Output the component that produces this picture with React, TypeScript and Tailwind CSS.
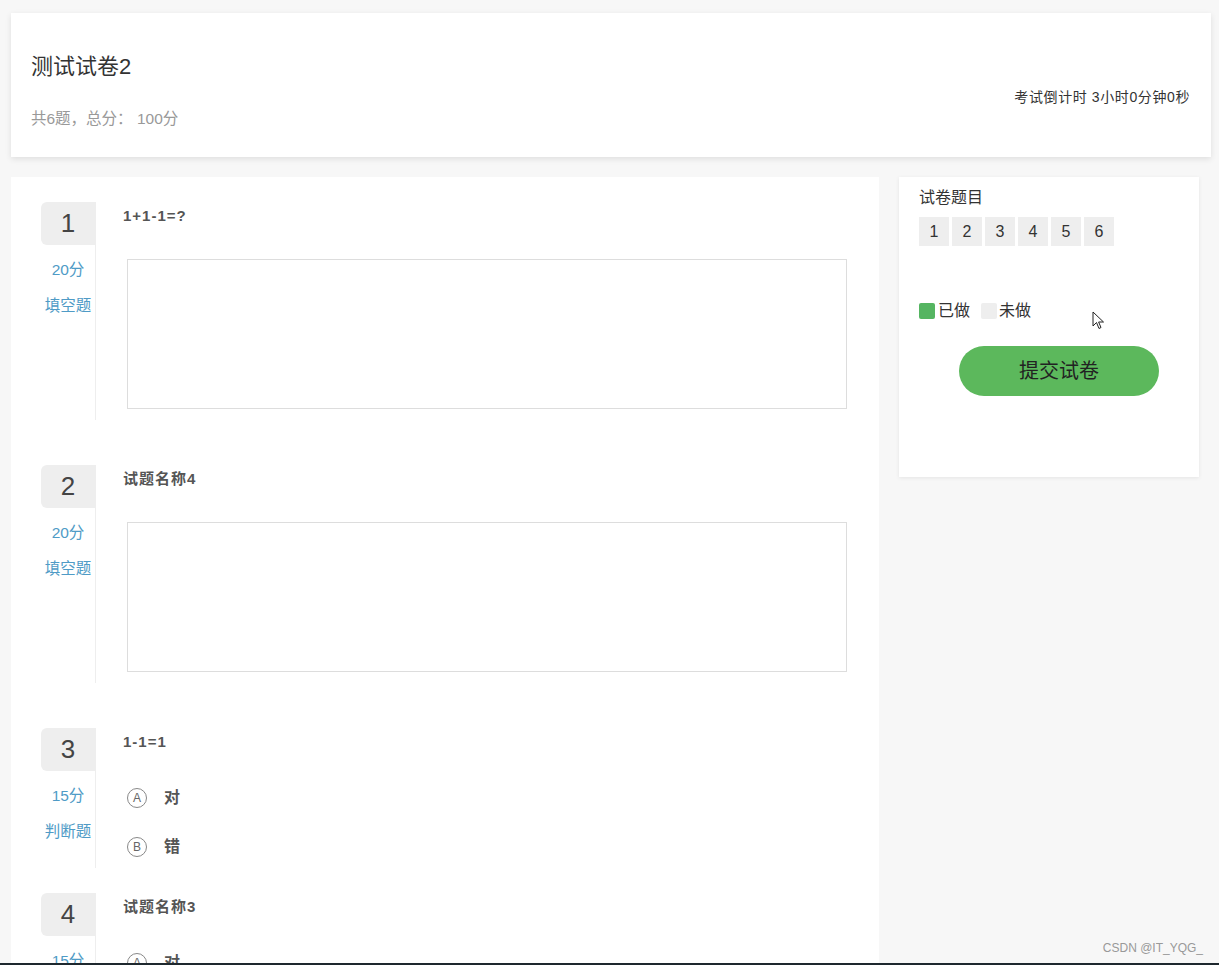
import React from 'react';

type Q = {
  no: number;
  title: string;
  score: string;
  kind: string;
  type: 'blank' | 'judge';
};

const questions: Q[] = [
  { no: 1, title: '1+1-1=?', score: '20分', kind: '填空题', type: 'blank' },
  { no: 2, title: '试题名称4', score: '20分', kind: '填空题', type: 'blank' },
  { no: 3, title: '1-1=1', score: '15分', kind: '判断题', type: 'judge' },
  { no: 4, title: '试题名称3', score: '15分', kind: '判断题', type: 'judge' },
];

const font = 'font-["Liberation_Sans","Noto_Sans_CJK_SC",sans-serif]';

const Question: React.FC<{ q: Q }> = ({ q }) => (
  <div className="flex">
    {/* 左侧题号 */}
    <div className="w-[55px] shrink-0 flex flex-col items-center border-r border-[#eee]">
      <div className="w-full h-[43px] bg-[#eee] rounded-l-[6px] flex items-center justify-center text-[26px] text-[#444]">
        {q.no}
      </div>
      <div className="mt-[15px] text-[15.5px] leading-[20px] text-[#4f9bc6]">{q.score}</div>
      <div className="mt-[16px] text-[15.5px] leading-[20px] text-[#4f9bc6]">{q.kind}</div>
    </div>
    {/* 题目内容 */}
    <div className="flex-1 pl-[27px] pr-[31px] pb-[11px]">
      <div className="pt-[4px] text-[15px] leading-[20px] font-bold text-[#555] tracking-[1px]">{q.title}</div>
      {q.type === 'blank' ? (
        <textarea className="mt-[33px] ml-1 block w-[720px] h-[150px] border border-[#ddd] resize-none outline-none" />
      ) : (
        <div className="mt-[36px] flex flex-col gap-[29px] pl-1">
          {['A', 'B'].map((k, i) => (
            <div key={k} className="flex items-center h-[20px]">
              <span className="w-[20px] h-[20px] rounded-full border border-[#888] text-[12px] text-[#666] flex items-center justify-center leading-none">
                {k}
              </span>
              <span className="ml-[17px] text-[16px] font-bold text-[#555]">{i === 0 ? '对' : '错'}</span>
            </div>
          ))}
        </div>
      )}
    </div>
  </div>
);

const App: React.FC = () => {
  return (
    <div className={`min-h-[965px] bg-[#f7f7f7] ${font} relative overflow-hidden`}>
      <div className="w-[1200px] ml-[11px] pt-[13px]">
        {/* 头部 */}
        <div className="bg-white h-[144px] shadow-[0_2px_6px_rgba(0,0,0,0.1)] px-5 flex items-end justify-between pb-[28px]">
          <div>
            <div className="text-[22px] leading-[30px] text-[#333]">测试试卷2</div>
            <div className="mt-[27px] text-[15.5px] leading-[20px] text-[#999]">共6题，总分： 100分</div>
          </div>
          <div className="text-[14px] text-[#333] mb-[21px] mr-[1px] tracking-[0.6px]">考试倒计时 3小时0分钟0秒</div>
        </div>

        <div className="flex items-start gap-5 mt-5">
          {/* 试题 */}
          <div className="w-[868px] bg-white pl-[30px] pt-[25px] h-[790px] overflow-hidden flex flex-col">
            <Question q={questions[0]} />
            <div className="mt-[45px]"><Question q={questions[1]} /></div>
            <div className="mt-[45px]"><Question q={questions[2]} /></div>
            <div className="mt-[25px]"><Question q={questions[3]} /></div>
          </div>

          {/* 答题卡 */}
          <div className="w-[300px] h-[300px] bg-white shadow-[0_1px_4px_rgba(0,0,0,0.08)] px-5 pt-[11px]">
            <div className="text-[16px] leading-[20px] text-[#333]">试卷题目</div>
            <div className="mt-[9px] flex gap-[3px]">
              {[1, 2, 3, 4, 5, 6].map((n) => (
                <div key={n} className="w-[30px] h-[29px] bg-[#eee] flex items-center justify-center text-[16px] text-[#333]">
                  {n}
                </div>
              ))}
            </div>
            <div className="mt-[53px] flex items-center text-[16px] text-[#333]">
              <span className="w-4 h-4 bg-[#55b561] rounded-[2px]" />
              <span className="ml-[3px]">已做</span>
              <span className="ml-[11px] w-4 h-4 bg-[#eee] rounded-[2px]" />
              <span className="ml-[2px]">未做</span>
            </div>
            <div className="mt-[23px] pl-[40px]">
              <button className="w-[200px] h-[50px] rounded-full bg-[#5cb85c] text-[20px] text-[#222]">提交试卷</button>
            </div>
          </div>
        </div>
      </div>

      {/* 鼠标指针 */}
      <svg className="absolute left-[1092px] top-[311px]" width="13" height="20" viewBox="0 0 13 20">
        <path d="M1 1 L1 15 L4.5 11.5 L7 17.5 L9 16.5 L6.6 11 L11.5 11 Z" fill="#fff" stroke="#222" strokeWidth="1" strokeLinejoin="round" />
      </svg>

      <div className="absolute right-[16px] top-[939px] text-[12px] text-[#999]">CSDN @IT_YQG_</div>
      <div className="absolute left-0 right-0 bottom-0 h-[4px] bg-[#1e282e]" />
    </div>
  );
};

export default App;
